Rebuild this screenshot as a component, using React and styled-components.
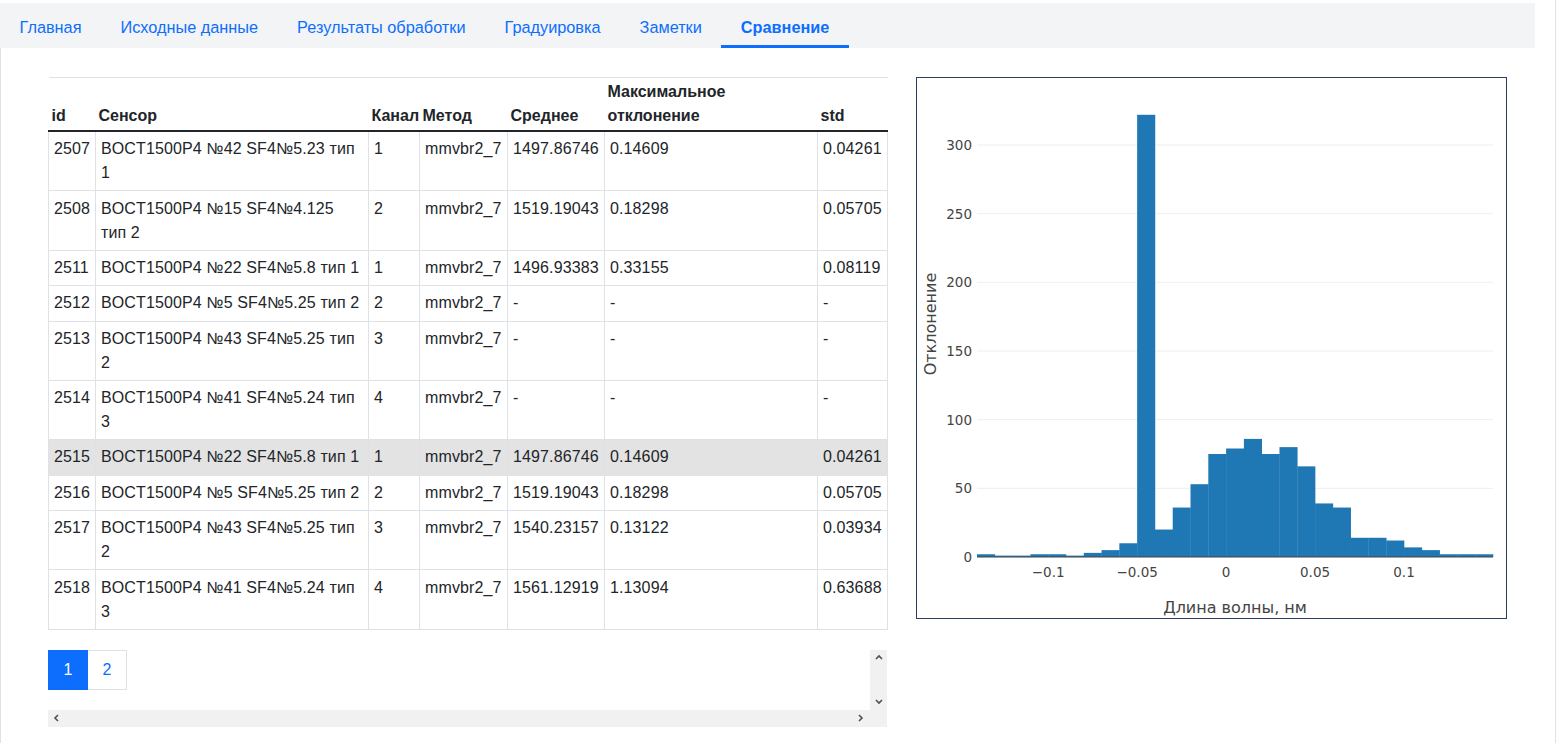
import React from "react";
import styled, { createGlobalStyle } from "styled-components";

const GlobalStyle = createGlobalStyle`
  * { box-sizing: border-box; }
  body {
    margin: 0;
    background: #fff;
    color: #212529;
    font-family: "Liberation Sans", Arial, sans-serif;
    font-size: 16px;
    line-height: 1.5;
  }
`;

const tabs = ["Главная", "Исходные данные", "Результаты обработки", "Градуировка", "Заметки", "Сравнение"];

const rows = [
  ["2507", "BOCT1500P4 №42 SF4№5.23 тип 1", "1", "mmvbr2_7", "1497.86746", "0.14609", "0.04261"],
  ["2508", "BOCT1500P4 №15 SF4№4.125 тип 2", "2", "mmvbr2_7", "1519.19043", "0.18298", "0.05705"],
  ["2511", "BOCT1500P4 №22 SF4№5.8 тип 1", "1", "mmvbr2_7", "1496.93383", "0.33155", "0.08119"],
  ["2512", "BOCT1500P4 №5 SF4№5.25 тип 2", "2", "mmvbr2_7", "-", "-", "-"],
  ["2513", "BOCT1500P4 №43 SF4№5.25 тип 2", "3", "mmvbr2_7", "-", "-", "-"],
  ["2514", "BOCT1500P4 №41 SF4№5.24 тип 3", "4", "mmvbr2_7", "-", "-", "-"],
  ["2515", "BOCT1500P4 №22 SF4№5.8 тип 1", "1", "mmvbr2_7", "1497.86746", "0.14609", "0.04261"],
  ["2516", "BOCT1500P4 №5 SF4№5.25 тип 2", "2", "mmvbr2_7", "1519.19043", "0.18298", "0.05705"],
  ["2517", "BOCT1500P4 №43 SF4№5.25 тип 2", "3", "mmvbr2_7", "1540.23157", "0.13122", "0.03934"],
  ["2518", "BOCT1500P4 №41 SF4№5.24 тип 3", "4", "mmvbr2_7", "1561.12919", "1.13094", "0.63688"],
];

const colWidths = [47, 273, 51, 88, 97, 213, 70];

// histogram bins of 0.01 starting at -0.14
const bins = [2, 1, 1, 2, 2, 1, 3, 5, 10, 322, 20, 36, 53, 75, 79, 86, 75, 80, 66, 39, 36, 14, 14, 12, 7, 5, 2, 2, 2];

const Page = styled.div`
  width: 1556px;
  height: 743px;
  border-right: 1px solid #dee2e6;
  overflow: hidden;
  display: flex;
  flex-direction: column;
`;

const Nav = styled.nav`
  margin-top: 3px;
  width: 1535px;
  height: 45px;
  background: #f3f4f6;
  display: flex;
`;

const Tab = styled.a`
  display: flex;
  align-items: center;
  padding: 7px 19.5px 0;
  font-size: 16.3px;
  color: #0d6efd;
  font-weight: ${(p) => (p.$active ? 700 : 400)};
  border-bottom: 3px solid ${(p) => (p.$active ? "#0d6efd" : "transparent")};
  text-decoration: none;
  cursor: pointer;
`;

const Content = styled.main`
  flex: 1;
  border-left: 1px solid #dee2e6;
  padding: 29px 0 0 47px;
  display: flex;
  align-items: flex-start;
  gap: 29px;
`;

const LeftColumn = styled.div`
  width: 839px;
  display: flex;
  flex-direction: column;
  gap: 20px;
`;

const Table = styled.table`
  width: 839px;
  table-layout: fixed;
  border-collapse: collapse;
  border-top: 1px solid #dee2e6;
`;

const Th = styled.th`
  text-align: left;
  vertical-align: bottom;
  padding: 2px 3px;
  font-weight: 700;
  white-space: ${(p) => (p.$nowrap ? "nowrap" : "normal")};
  border-bottom: 2px solid #212529;
`;

const Tr = styled.tr`
  background: ${(p) => (p.$selected ? "#e3e3e3" : "transparent")};
`;

const Td = styled.td`
  vertical-align: top;
  padding: 5.2px 5px;
  letter-spacing: 0.12px;
  border: 1px solid #dee2e6;
  border-top: none;
`;

const ScrollBox = styled.div`
  display: grid;
  grid-template-columns: 1fr 17px;
  grid-template-rows: 60px 17px;
  width: 839px;
`;

const Pagination = styled.ul`
  list-style: none;
  margin: 0;
  padding: 0;
  display: flex;
`;

const PageLink = styled.li`
  width: ${(p) => (p.$active ? "40px" : "39px")};
  height: 40px;
  display: flex;
  align-items: center;
  justify-content: center;
  font-size: 16px;
  background: ${(p) => (p.$active ? "#0d6efd" : "#fff")};
  color: ${(p) => (p.$active ? "#fff" : "#0d6efd")};
  border: 1px solid ${(p) => (p.$active ? "#0d6efd" : "#dee2e6")};
  border-left: ${(p) => (p.$active ? "1px solid #0d6efd" : "none")};
  cursor: pointer;
`;

const VTrack = styled.div`
  background: #f1f1f1;
  display: flex;
  flex-direction: column;
  justify-content: space-between;
  align-items: center;
  padding: 4px 0;
`;

const HTrack = styled.div`
  grid-column: 1 / 3;
  background: #f1f1f1;
  display: flex;
  justify-content: space-between;
  align-items: center;
  padding: 0 22px 0 5px;
`;

const ChartBox = styled.div`
  width: 591px;
  height: 542px;
  border: 1px solid #2a3f5f;
  background: #fff;
`;

const Arrow = ({ dir }) => {
  const pts = {
    up: "1,5 4,2 7,5",
    down: "1,2 4,5 7,2",
    left: "5,1 2,4 5,7",
    right: "2,1 5,4 2,7",
  }[dir];
  return (
    <svg width="8" height="8" viewBox="0 0 8 8">
      <polyline points={pts} fill="none" stroke="#505050" strokeWidth="1.6" />
    </svg>
  );
};

const Histogram = () => {
  const x0 = 60;
  const x1 = 576;
  const y0 = 479;
  const perUnit = 412 / 300;
  const xMin = -0.14;
  const xSpan = 0.29;
  const sx = (v) => x0 + ((v - xMin) / xSpan) * (x1 - x0);
  const sy = (v) => y0 - v * perUnit;
  const bw = (x1 - x0) / bins.length;
  const font = '"DejaVu Sans", Verdana, sans-serif';

  return (
    <svg width="589" height="540" viewBox="0 0 589 540">
      {[50, 100, 150, 200, 250, 300].map((v) => (
        <line key={v} x1={x0} x2={x1} y1={sy(v)} y2={sy(v)} stroke="#eee" strokeWidth="1" />
      ))}
      {bins.map((v, i) => (
        <rect key={i} x={x0 + i * bw} y={sy(v)} width={bw + 0.3} height={v * perUnit} fill="#1f77b4" />
      ))}
      <line x1={x0} x2={x1} y1={y0} y2={y0} stroke="#444" strokeWidth="1" />
      {[0, 50, 100, 150, 200, 250, 300].map((v) => (
        <text key={v} x={55} y={sy(v) + 5} textAnchor="end" fontSize="13.5" fill="#444" fontFamily={font}>
          {v}
        </text>
      ))}
      {[
        [-0.1, "\u22120.1"],
        [-0.05, "\u22120.05"],
        [0, "0"],
        [0.05, "0.05"],
        [0.1, "0.1"],
      ].map(([v, label]) => (
        <text key={label} x={sx(v)} y={499} textAnchor="middle" fontSize="13.5" fill="#444" fontFamily={font}>
          {label}
        </text>
      ))}
      <text x={318} y={535} textAnchor="middle" fontSize="16" fill="#444" fontFamily={font}>
        Длина волны, нм
      </text>
      <text
        x={19}
        y={246}
        textAnchor="middle"
        fontSize="16"
        fill="#444"
        fontFamily={font}
        transform="rotate(-90 19 246)"
      >
        Отклонение
      </text>
    </svg>
  );
};

const App = () => {
  return (
    <Page>
      <GlobalStyle />
      <Nav>
        {tabs.map((t) => (
          <Tab key={t} $active={t === "Сравнение"}>
            {t}
          </Tab>
        ))}
      </Nav>
      <Content>
        <LeftColumn>
          <Table>
            <colgroup>
              {colWidths.map((w, i) => (
                <col key={i} style={{ width: w }} />
              ))}
            </colgroup>
            <thead>
              <tr>
                <Th>id</Th>
                <Th>Сенсор</Th>
                <Th $nowrap>Канал</Th>
                <Th>Метод</Th>
                <Th>Среднее</Th>
                <Th>Максимальное отклонение</Th>
                <Th>std</Th>
              </tr>
            </thead>
            <tbody>
              {rows.map((r) => (
                <Tr key={r[0]} $selected={r[0] === "2515"}>
                  {r.map((c, i) => (
                    <Td key={i}>{c}</Td>
                  ))}
                </Tr>
              ))}
            </tbody>
          </Table>
          <ScrollBox>
            <Pagination>
              <PageLink $active>1</PageLink>
              <PageLink>2</PageLink>
            </Pagination>
            <VTrack>
              <Arrow dir="up" />
              <Arrow dir="down" />
            </VTrack>
            <HTrack>
              <Arrow dir="left" />
              <Arrow dir="right" />
            </HTrack>
          </ScrollBox>
        </LeftColumn>
        <ChartBox>
          <Histogram />
        </ChartBox>
      </Content>
    </Page>
  );
};

export default App;
